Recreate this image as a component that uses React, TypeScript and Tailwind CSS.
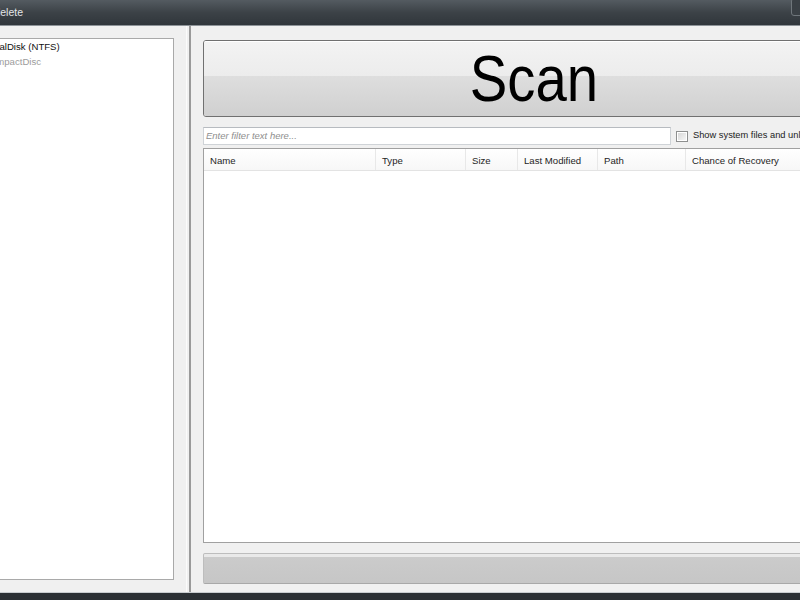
import React from "react";

const cols = [
  { label: "Name", w: "w-[172px]" },
  { label: "Type", w: "w-[90px]" },
  { label: "Size", w: "w-[52px]" },
  { label: "Last Modified", w: "w-[80px]" },
  { label: "Path", w: "w-[88px]" },
  { label: "Chance of Recovery", w: "w-[180px]" },
];

export default function App() {
  return (
    <div
      className="relative w-[800px] h-[600px] overflow-hidden bg-[#2e3338]"
      style={{ fontFamily: '"Liberation Sans", Arial, sans-serif' }}
    >
      <div className="-ml-[18px] w-[895px] h-[600px] flex flex-col shrink-0">
        {/* title bar */}
        <div className="h-[25px] shrink-0 bg-gradient-to-b from-[#545b61] via-[#3c4247] to-[#30363b] flex items-center">
          <span className="text-[10.5px] text-[#e4e6e8] -ml-[1px]">Undelete</span>
        </div>
        <div className="h-[1px] shrink-0 bg-[#8d9398]" />
        {/* body */}
        <div className="h-[566px] shrink-0 bg-[#f0f0f0] flex">
          {/* left pane */}
          <div className="w-[204px] shrink-0 pt-[12px] pb-[12px] pr-[12px] flex">
            <div className="flex-1 bg-white border border-[#a9a9a9] pl-[1px] text-[9.6px] leading-[15px]">
              <div className="text-[#111]">LocalDisk (NTFS)</div>
              <div className="text-[#9c9c9c]">CompactDisc</div>
            </div>
          </div>
          {/* splitter */}
          <div className="w-[5px] shrink-0 flex">
            <div className="w-[1px] bg-[#fbfbfb]" />
            <div className="w-[2px]" />
            <div className="w-[2px] bg-[#9a9a9a]" />
          </div>
          {/* right pane */}
          <div className="w-[686px] shrink-0 px-[12px] pt-[14px] pb-[8px] flex flex-col">
            <div className="h-[77px] shrink-0 rounded-[3px] border border-[#707070] flex flex-col overflow-hidden relative">
              <div className="h-[35px] bg-gradient-to-b from-[#f3f3f3] to-[#ececec] border-t border-white" />
              <div className="flex-1 bg-gradient-to-b from-[#dedede] to-[#d0d0d0]" />
              <div className="absolute inset-0 flex items-center justify-center">
                <span className="inline-block text-[64px] leading-none text-black scale-x-[0.88]">Scan</span>
              </div>
            </div>
            <div className="mt-[10px] h-[18px] shrink-0 flex items-center">
              <div className="w-[468px] shrink-0 h-[18px] bg-white border border-[#cfd3d7] border-t-[#b7bbc0] flex items-center pl-[2px]">
                <span className="text-[9.5px] italic text-[#8e8e8e]">Enter filter text here...</span>
              </div>
              <div className="ml-[5px] shrink-0 w-[12px] h-[11px] border border-[#8e8f8f] bg-white p-[1px] flex">
                <div className="flex-1 bg-gradient-to-br from-[#d8d8d8] to-[#f6f6f6]" />
              </div>
              <span className="ml-[5px] text-[9.3px] text-[#222] whitespace-nowrap">
                Show system files and unlisted files
              </span>
            </div>
            <div className="mt-[3px] h-[395px] shrink-0 bg-white border border-[#a0a0a0] flex flex-col">
              <div className="h-[22px] flex border-b border-[#e3e3e3] bg-gradient-to-b from-white to-[#f7f7f7]">
                {cols.map((c, i) => (
                  <div
                    key={c.label}
                    className={`${c.w} shrink-0 h-full flex items-center pl-[6px] pt-[3px] text-[9.6px] text-[#1e1e1e] whitespace-nowrap ${
                      i < cols.length - 1 ? "border-r border-[#e8e8e8]" : ""
                    }`}
                  >
                    {c.label}
                  </div>
                ))}
              </div>
              <div className="flex-1" />
            </div>
            <div className="mt-[10px] h-[31px] shrink-0 rounded-[2px] border border-[#bdbdbd] border-b-[#a8a8a8] bg-[#c9c9c9] flex flex-col overflow-hidden">
              <div className="h-[3px] bg-[#e9e9e9]" />
              <div className="flex-1 bg-gradient-to-b from-[#cbcbcb] to-[#c6c6c6]" />
            </div>
          </div>
        </div>
        <div className="h-[1px] shrink-0 bg-[#c9cdd0]" />
        <div className="flex-1 bg-[#2b3034]" />
      </div>
      {/* caption button edge */}
      <div className="absolute left-[791px] -top-[2px] w-[40px] h-[18px] rounded-[3px] border border-[#6f767b] bg-[#3a4045]" />
    </div>
  );
}
